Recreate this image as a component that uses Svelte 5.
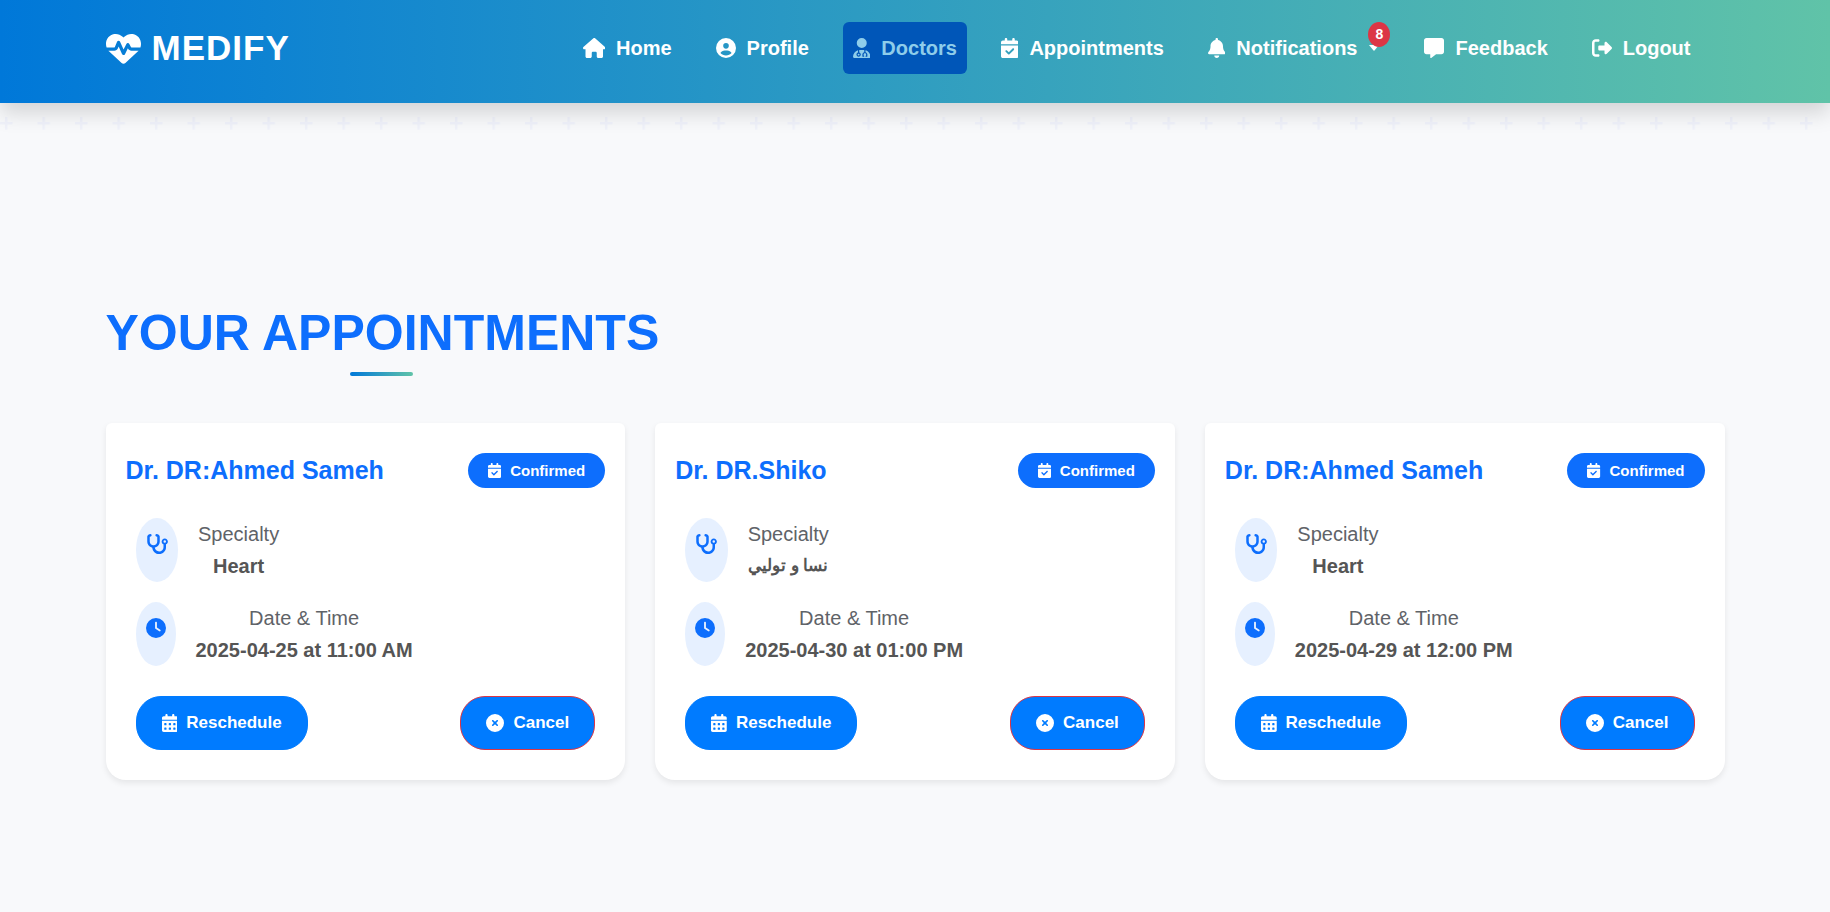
<script lang="ts">
  const icons = {
    heart: { w: 512, d: 'M228.3 469.1L47.6 300.4c-4.2-3.9-8.2-8.1-11.9-12.4h87c22.6 0 43-13.6 51.7-34.5l10.5-25.2 49.3 109.5c3.8 8.5 12.1 14 21.4 14.1s17.8-5 22-13.3L320 253.7l1.7 3.4c9.5 19 28.9 31 50.1 31H476.300c-3.700 4.300-7.700 8.500-11.900 12.400L283.700 469.100c-7.500 7-17.400 10.900-27.700 10.900s-20.200-3.900-27.700-10.900zM503.700 240h-132c-3 0-5.800-1.700-7.200-4.400l-23.200-46.300c-4.100-8.100-12.400-13.300-21.500-13.300s-17.400 5.100-21.500 13.300l-41.400 82.800L205.900 158.200c-3.900-8.700-12.700-14.300-22.200-14.100s-18.100 5.900-21.800 14.800l-31.800 76.300c-1.200 3-4.200 4.900-7.400 4.900H16c-2.600 0-5 .4-7.300 1.100C3 225.200 0 208.200 0 190.900v-5.800c0-69.900 50.500-129.500 119.400-141C165 36.500 211.400 51.400 244 84l12 12 12-12c32.600-32.600 79-47.500 124.600-39.900C461.500 55.600 512 115.200 512 185.100v5.800c0 16.900-2.800 33.500-8.300 49.100z' },
    home: { w: 576, d: 'M575.8 255.5c0 18-15 32.100-32 32.100h-32l.7 160.200c0 2.700-.2 5.400-.5 8.100V472c0 22.100-17.900 40-40 40H456c-1.100 0-2.200 0-3.300-.1c-1.400 .1-2.800 .1-4.200 .1H416 392c-22.100 0-40-17.900-40-40V448 384c0-17.700-14.300-32-32-32H256c-17.700 0-32 14.300-32 32v64 24c0 22.100-17.900 40-40 40H160 128.100c-1.500 0-3-.1-4.500-.2c-1.200 .1-2.400 .2-3.600 .2H104c-22.100 0-40-17.900-40-40V360c0-.9 0-1.900 .1-2.800V287.600H32c-18 0-32-14-32-32.100c0-9 3-17 10-24L266.400 8c7-7 15-8 22-8s15 2 21 7L564.800 231.500c8 7 12 15 11 24z' },
    user: { w: 512, d: 'M399 384.2C376.900 345.800 335.400 320 288 320H224c-47.400 0-88.900 25.800-111 64.200c35.200 39.200 86.200 63.800 143 63.800s107.800-24.700 143-63.800zM0 256a256 256 0 1 1 512 0A256 256 0 1 1 0 256zm256 16a72 72 0 1 0 0-144 72 72 0 1 0 0 144z' },
    doctor: { w: 448, d: 'M224 256A128 128 0 1 0 224 0a128 128 0 1 0 0 256zm-96 55.200C54 332.900 0 401.300 0 482.300C0 498.700 13.300 512 29.700 512H418.300c16.400 0 29.700-13.300 29.700-29.700c0-81-54-149.400-128-171.100V362c27.600 7.100 48 32.200 48 62v40c0 8.800-7.200 16-16 16H336c-8.800 0-16-7.200-16-16s7.200-16 16-16V424c0-17.700-14.300-32-32-32s-32 14.300-32 32v24c8.800 0 16 7.200 16 16s-7.200 16-16 16H256c-8.800 0-16-7.200-16-16V424c0-29.800 20.400-54.900 48-62V304.900c-6-.6-12.100-.9-18.300-.9H178.300c-6.200 0-12.300 .3-18.300 .9v65.400c23.100 6.900 40 28.300 40 53.700c0 30.900-25.100 56-56 56s-56-25.100-56-56c0-25.400 16.900-46.800 40-53.700V311.200zM144 448a24 24 0 1 0 0-48 24 24 0 1 0 0 48z' },
    check: { w: 448, d: 'M128 0c17.700 0 32 14.300 32 32V64H288V32c0-17.700 14.300-32 32-32s32 14.300 32 32V64h48c26.500 0 48 21.500 48 48v48H0V112C0 85.500 21.500 64 48 64H96V32c0-17.700 14.300-32 32-32zM0 192H448V464c0 26.500-21.500 48-48 48H48c-26.500 0-48-21.500-48-48V192zM329 305c9.400-9.400 9.400-24.600 0-33.900s-24.600-9.400-33.900 0l-95 95-47-47c-9.400-9.400-24.600-9.400-33.900 0s-9.400 24.600 0 33.900l64 64c9.400 9.400 24.600 9.400 33.900 0L329 305z' },
    bell: { w: 448, d: 'M224 0c-17.700 0-32 14.300-32 32V51.200C119 66 64 130.600 64 208v18.800c0 47-17.300 92.400-48.500 127.600l-7.400 8.300c-8.400 9.400-10.400 22.900-5.300 34.400S19.400 416 32 416H416c12.600 0 24-7.400 29.200-18.900s3.100-25-5.300-34.400l-7.400-8.300C401.300 319.200 384 273.900 384 226.800V208c0-77.400-55-142-128-156.800V32c0-17.700-14.300-32-32-32zm45.300 493.300c12-12 18.700-28.300 18.700-45.300H224 160c0 17 6.700 33.300 18.700 45.300s28.300 18.700 45.300 18.700s33.300-6.700 45.300-18.700z' },
    message: { w: 512, d: 'M64 0C28.700 0 0 28.700 0 64V352c0 35.300 28.700 64 64 64h96v80c0 6.100 3.400 11.600 8.800 14.300s11.900 2.100 16.800-1.500L309.300 416H448c35.300 0 64-28.700 64-64V64c0-35.300-28.700-64-64-64H64z' },
    logout: { w: 512, d: 'M377.900 105.900L500.700 228.700c7.200 7.200 11.300 17.100 11.300 27.300s-4.100 20.100-11.300 27.300L377.900 406.100c-6.400 6.400-15 9.900-24 9.900c-18.700 0-33.900-15.200-33.900-33.900l0-62.100-128 0c-17.700 0-32-14.300-32-32l0-64c0-17.700 14.300-32 32-32l128 0 0-62.100c0-18.700 15.200-33.900 33.900-33.900c9 0 17.600 3.600 24 9.900zM160 96L96 96c-17.700 0-32 14.300-32 32l0 256c0 17.700 14.300 32 32 32l64 0c17.700 0 32 14.300 32 32s-14.300 32-32 32l-64 0c-53 0-96-43-96-96L0 128C0 75 43 32 96 32l64 0c17.700 0 32 14.300 32 32s-14.300 32-32 32z' },
    stethoscope: { w: 576, d: 'M142.400 21.900c5.600 16.800-3.500 34.900-20.200 40.500L96 71.100V192c0 53 43 96 96 96s96-43 96-96V71.100l-26.100-8.700c-16.800-5.600-25.800-23.700-20.200-40.500s23.700-25.800 40.500-20.200l26.100 8.700C334.400 19.100 352 43.500 352 71.100V192c0 77.200-54.600 141.600-127.300 156.700C231 404.600 278.400 448 336 448c61.900 0 112-50.100 112-112V265.300c-28.300-12.300-48-40.500-48-73.300c0-44.200 35.800-80 80-80s80 35.800 80 80c0 32.800-19.700 61-48 73.300V336c0 97.200-78.800 176-176 176c-92.900 0-168.900-71.900-175.500-163.100C87.200 334.200 32 269.600 32 192V71.100c0-27.500 17.600-52 43.800-60.700l26.100-8.700c16.800-5.600 34.900 3.500 40.500 20.200zM480 224a32 32 0 1 0 0-64 32 32 0 1 0 0 64z' },
    clock: { w: 512, d: 'M256 0a256 256 0 1 1 0 512A256 256 0 1 1 256 0zM232 120V256c0 8 4 15.500 10.700 20l96 64c11 7.400 25.900 4.400 33.300-6.700s4.400-25.900-6.700-33.300L280 243.200V120c0-13.300-10.700-24-24-24s-24 10.700-24 24z' },
    calendar: { w: 448, d: 'M128 0c17.700 0 32 14.300 32 32V64H288V32c0-17.700 14.300-32 32-32s32 14.300 32 32V64h48c26.500 0 48 21.500 48 48v48H0V112C0 85.500 21.500 64 48 64H96V32c0-17.700 14.300-32 32-32zM0 192H448V464c0 26.500-21.500 48-48 48H48c-26.500 0-48-21.500-48-48V192zm64 80v32c0 8.800 7.200 16 16 16h32c8.800 0 16-7.200 16-16V272c0-8.800-7.200-16-16-16H80c-8.800 0-16 7.200-16 16zm128 0v32c0 8.800 7.200 16 16 16h32c8.800 0 16-7.200 16-16V272c0-8.800-7.200-16-16-16H208c-8.800 0-16 7.200-16 16zm144-16c-8.800 0-16 7.200-16 16v32c0 8.800 7.200 16 16 16h32c8.800 0 16-7.200 16-16V272c0-8.800-7.200-16-16-16H336zM64 400v32c0 8.800 7.200 16 16 16h32c8.800 0 16-7.200 16-16V400c0-8.800-7.200-16-16-16H80c-8.800 0-16 7.200-16 16zm144-16c-8.800 0-16 7.200-16 16v32c0 8.800 7.200 16 16 16h32c8.800 0 16-7.200 16-16V400c0-8.800-7.200-16-16-16H208zm112 16v32c0 8.800 7.200 16 16 16h32c8.800 0 16-7.200 16-16V400c0-8.800-7.200-16-16-16H336c-8.800 0-16 7.200-16 16z' },
    cross: { w: 512, d: 'M256 512A256 256 0 1 0 256 0a256 256 0 1 0 0 512zM175 175c9.400-9.400 24.600-9.400 33.900 0l47 47 47-47c9.400-9.400 24.600-9.400 33.900 0s9.400 24.600 0 33.900l-47 47 47 47c9.400 9.400 9.400 24.600 0 33.900s-24.600 9.400-33.900 0l-47-47-47 47c-9.400 9.400-24.600 9.400-33.900 0s-9.400-24.600 0-33.900l47-47-47-47c-9.400-9.400-9.400-24.600 0-33.900z' }
  };

  const links = [
    { label: 'Home', icon: 'home' },
    { label: 'Profile', icon: 'user' },
    { label: 'Doctors', icon: 'doctor', active: true },
    { label: 'Appointments', icon: 'check' },
    { label: 'Notifications', icon: 'bell', count: 8 },
    { label: 'Feedback', icon: 'message' },
    { label: 'Logout', icon: 'logout' }
  ];

  const appointments = [
    { doctor: 'DR:Ahmed Sameh', specialty: 'Heart', lang: 'en', date: '2025-04-25', time: '11:00 AM' },
    { doctor: 'DR.Shiko', specialty: 'نسا و توليي', lang: 'ar', date: '2025-04-30', time: '01:00 PM' },
    { doctor: 'DR:Ahmed Sameh', specialty: 'Heart', lang: 'en', date: '2025-04-29', time: '12:00 PM' }
  ];
</script>

{#snippet icon(name)}
  <svg class="icon" viewBox="0 0 {icons[name].w} 512" style="width: {icons[name].w / 512}em" aria-hidden="true">
    <path d={icons[name].d} fill-rule={name === 'doctor' ? 'nonzero' : 'evenodd'} />
  </svg>
{/snippet}

<header>
  <div class="container bar">
    <a class="brand" href="#home">{@render icon('heart')}MEDIFY</a>
    <nav>
      {#each links as link}
        <a class="link" class:active={link.active} href="#{link.label.toLowerCase()}">
          {@render icon(link.icon)}{link.label}
          {#if link.count}
            <svg class="caret" viewBox="0 0 10 6" aria-hidden="true"><path d="M0 0h10L5 6z" /></svg>
            <span class="count">{link.count}</span>
          {/if}
        </a>
      {/each}
    </nav>
  </div>
  <svg class="pluses" aria-hidden="true">
    <defs>
      <pattern id="plus" width="37.5" height="37.5" patternUnits="userSpaceOnUse" y="14">
        <path d="M5 0h2.500v5h5v2.500h-5v5H5v-5H0V5h5z" />
      </pattern>
    </defs>
    <rect width="100%" height="100%" fill="url(#plus)" />
  </svg>
</header>

<main class="container">
  <h1>Your Appointments</h1>
  <div class="cards">
    {#each appointments as item}
      <article>
        <div class="top">
          <h2>Dr. {item.doctor}</h2>
          <span class="status">{@render icon('check')}Confirmed</span>
        </div>
        <div class="body">
          <div class="row">
            <span class="bubble">{@render icon('stethoscope')}</span>
            <p>Specialty<strong lang={item.lang}>{item.specialty}</strong></p>
          </div>
          <div class="row">
            <span class="bubble">{@render icon('clock')}</span>
            <p>Date &amp; Time<strong>{item.date} at {item.time}</strong></p>
          </div>
        </div>
        <div class="actions">
          <button type="button">{@render icon('calendar')}Reschedule</button>
          <button type="button" class="cancel">{@render icon('cross')}Cancel</button>
        </div>
      </article>
    {/each}
  </div>
</main>

<style>
  :global(body) {
    margin: 0;
    background: #f8f9fb;
    color: #555;
    font-family: 'Liberation Sans', Arial, sans-serif;
    font-size: 20px;
    line-height: 32px;
  }

  .container {
    box-sizing: border-box;
    max-width: 1667px;
    margin: 0 auto;
    padding: 0 24px;
  }

  .icon {
    height: 1em;
    flex: none;
    fill: currentColor;
  }

  header {
    position: relative;
    background: linear-gradient(90deg, #0078d9, #60c3a8);
    box-shadow: 0 10px 20px rgba(0, 0, 0, 0.15);
  }

  .pluses {
    position: absolute;
    top: 100%;
    left: 0;
    width: 100%;
    height: 30px;
    fill: rgba(110, 120, 230, 0.06);
    pointer-events: none;
  }

  .bar {
    display: flex;
    align-items: center;
    justify-content: space-between;
    min-height: 103px;
    padding-bottom: 7px;
  }

  .brand {
    display: flex;
    align-items: center;
    gap: 11px;
    color: #fff;
    font-size: 35px;
    font-weight: 700;
    letter-spacing: 1px;
    text-decoration: none;
  }

  nav {
    display: flex;
    gap: 24px;
    padding-right: 24px;
  }

  .link {
    position: relative;
    display: flex;
    align-items: center;
    gap: 11px;
    padding: 10px;
    border-radius: 6px;
    color: #fff;
    font-weight: 700;
    text-decoration: none;
  }

  .link.active {
    background: #0056b8;
    color: #8ecdea;
  }

  .caret {
    width: 12px;
    height: 6px;
    fill: currentColor;
  }

  .count {
    position: absolute;
    top: 0;
    right: 0;
    box-sizing: border-box;
    width: 22px;
    padding: 4px 0 5px;
    border-radius: 50%;
    background: #dc3545;
    font-size: 14px;
    line-height: 16px;
    text-align: center;
  }

  h1 {
    position: relative;
    width: fit-content;
    margin: 200px 0 47px;
    padding-bottom: 13px;
    color: #0d6efd;
    font-size: 50px;
    line-height: 60px;
    text-transform: uppercase;
  }

  h1::after {
    content: '';
    position: absolute;
    bottom: 0;
    left: 50%;
    width: 63px;
    height: 4px;
    margin-left: -32px;
    border-radius: 2px;
    background: linear-gradient(90deg, #0078d9, #60c3a8);
  }

  .cards {
    display: grid;
    grid-template-columns: repeat(auto-fit, minmax(440px, 1fr));
    gap: 30px;
    padding-bottom: 60px;
  }

  article {
    padding: 30px;
    border-radius: 6px 6px 20px 20px;
    background: #fff;
    box-shadow: 0 3px 6px rgba(0, 0, 0, 0.08);
  }

  .top {
    display: flex;
    align-items: center;
    justify-content: space-between;
    margin: 0 -10px 30px;
  }

  h2 {
    margin: 0;
    color: #0d6efd;
    font-size: 25px;
    line-height: 35px;
  }

  .status {
    display: flex;
    align-items: center;
    gap: 9px;
    padding: 0 20px;
    border-radius: 20px;
    background: #0d6efd;
    color: #fff;
    font-size: 15px;
    font-weight: 700;
    line-height: 35px;
  }

  .body {
    display: grid;
    gap: 20px;
    margin-bottom: 30px;
  }

  .row {
    display: flex;
    gap: 20px;
  }

  .bubble {
    display: flex;
    align-items: flex-start;
    padding: 16px 10px;
    border-radius: 50%;
    background: #e6f0ff;
    color: #0d6efd;
  }

  p {
    margin: 0;
    color: #5f6368;
    text-align: center;
  }

  strong {
    display: block;
    color: #555;
  }

  strong[lang='ar'] {
    font-size: 17px;
  }

  .actions {
    display: flex;
    justify-content: space-between;
  }

  button {
    display: flex;
    align-items: center;
    gap: 9px;
    padding: 10px 25px;
    border: 1px solid #007bff;
    border-radius: 25px;
    background: #007bff;
    color: #fff;
    font: 700 17px/32px 'Liberation Sans', Arial, sans-serif;
    cursor: pointer;
  }

  button .icon {
    font-size: 18px;
  }

  .cancel {
    border-color: #dc3545;
  }
</style>
